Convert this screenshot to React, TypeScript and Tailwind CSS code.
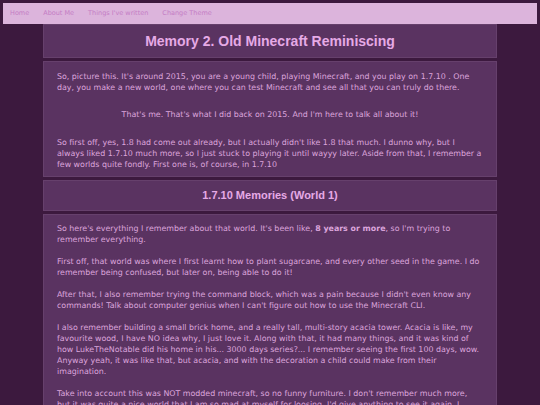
import React from "react";

const links = ["Home", "About Me", "Things I've written", "Change Theme"];

function Box({ children, className = "" }: { children: React.ReactNode; className?: string }) {
  return (
    <section className={`border border-[#66406c] bg-[#5a3361] ${className}`}>{children}</section>
  );
}

export default function App() {
  return (
    <div
      className="min-h-screen bg-[#3c193e] pt-[3px] text-[#dca5dc]"
      style={{ fontFamily: '"DejaVu Sans", Verdana, sans-serif' }}
    >
      <nav className="mx-[3px] flex h-[21px] items-center gap-[14px] bg-[#dcb4dc] px-[7px] text-[6.5px] text-[#c47cc4]">
        {links.map((l) => (
          <a key={l} href="#" className="leading-none">
            {l}
          </a>
        ))}
      </nav>

      <main className="mx-auto flex w-[454px] flex-col gap-[3px]">
        <Box className="flex h-[34px] items-center justify-center">
          <h1
            className="text-[14px] font-bold text-[#e6aae6]"
            style={{ fontFamily: '"Liberation Sans", Arial, sans-serif' }}
          >
            Memory 2. Old Minecraft Reminiscing
          </h1>
        </Box>

        <Box className="px-[13px] pt-[9px] pb-[6px] text-[7.9px] leading-[11px]">
          <p>
            So, picture this. It's around 2015, you are a young child, playing Minecraft, and you play on 1.7.10 . One
            day, you make a new world, one where you can test Minecraft and see all that you can truly do there.
          </p>
          <p className="mt-[16px] text-center">That's me. That's what I did back on 2015. And I'm here to talk all about it!</p>
          <p className="mt-[17px]">
            So first off, yes, 1.8 had come out already, but I actually didn't like 1.8 that much. I dunno why, but I
            always liked 1.7.10 much more, so I just stuck to playing it until wayyy later. Aside from that, I remember a
            few worlds quite fondly. First one is, of course, in 1.7.10
          </p>
        </Box>

        <Box className="flex h-[31px] items-center justify-center">
          <h2
            className="text-[11px] font-bold text-[#e6aae6]"
            style={{ fontFamily: '"Liberation Sans", Arial, sans-serif' }}
          >
            1.7.10 Memories (World 1)
          </h2>
        </Box>

        <Box className="flex flex-col gap-[11px] px-[13px] pt-[8px] pb-[10px] text-[7.9px] leading-[11px]">
          <p>
            So here's everything I remember about that world. It's been like, <b>8 years or more</b>, so I'm trying to
            remember everything.
          </p>
          <p>
            First off, that world was where I first learnt how to plant sugarcane, and every other seed in the game. I
            do remember being confused, but later on, being able to do it!
          </p>
          <p>
            After that, I also remember trying the command block, which was a pain because I didn't even know any
            commands! Talk about computer genius when I can't figure out how to use the Minecraft CLI.
          </p>
          <p>
            I also remember building a small brick home, and a really tall, multi-story acacia tower. Acacia is like, my
            favourite wood, I have NO idea why, I just love it. Along with that, it had many things, and it was kind of
            how LukeTheNotable did his home in his... 3000 days series?... I remember seeing the first 100 days, wow.
            Anyway yeah, it was like that, but acacia, and with the decoration a child could make from their
            imagination.
          </p>
          <p>
            Take into account this was NOT modded minecraft, so no funny furniture. I don't remember much more,
            <br />
            but it was quite a nice world that I am so mad at myself for loosing. I'd give anything to see it again. I
            really would.
          </p>
        </Box>
      </main>
    </div>
  );
}
